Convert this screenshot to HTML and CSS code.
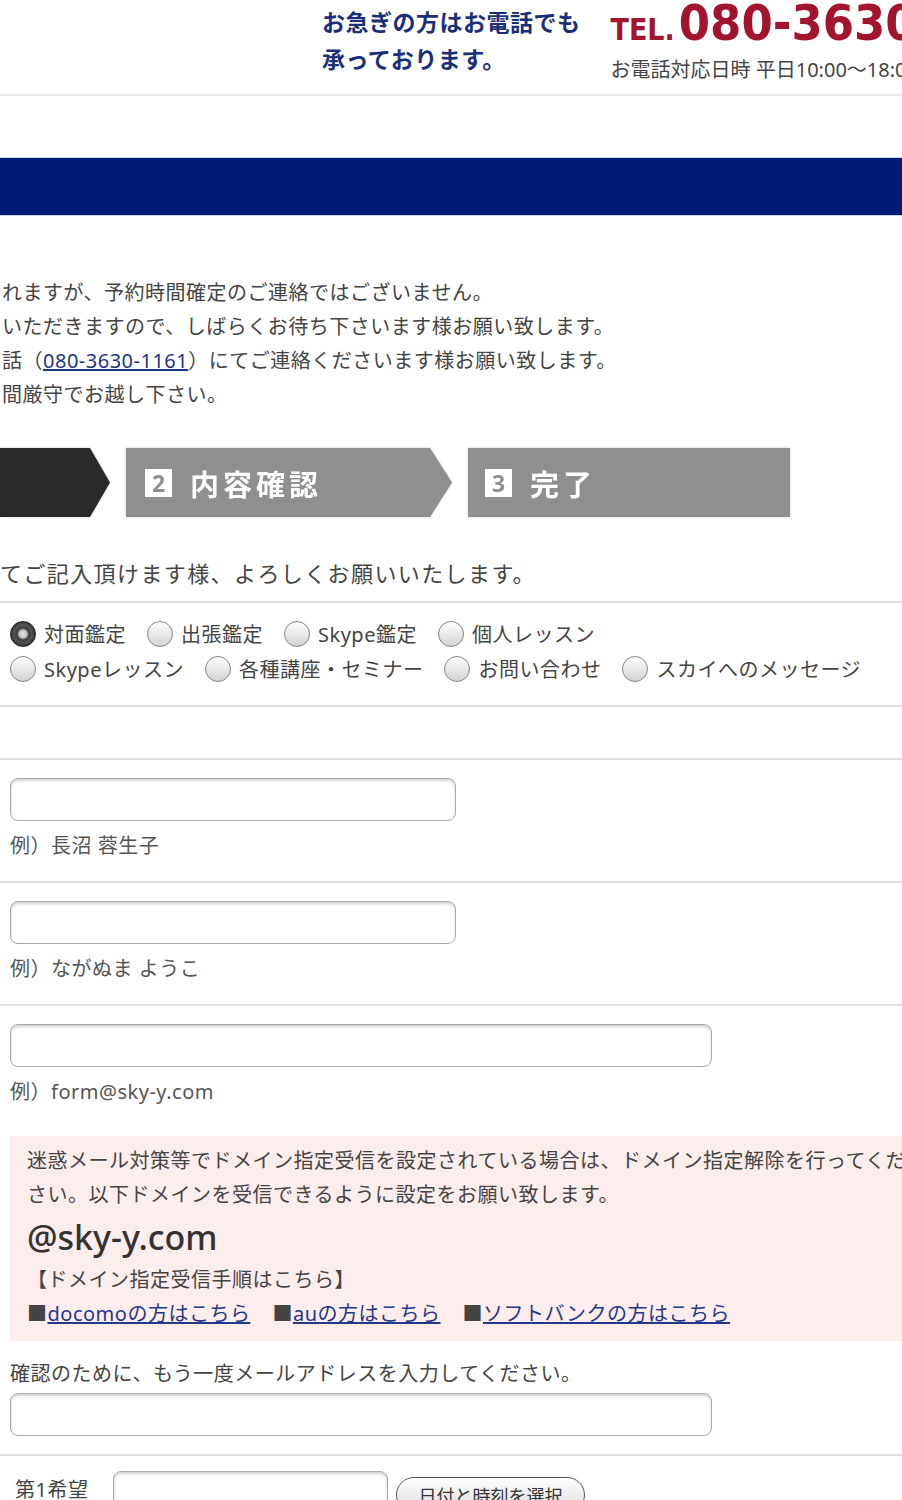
FILE: index.html
```html
<!DOCTYPE html>
<html lang="ja">
<head>
	<title>ご予約・お問い合わせ</title>
	<meta charset="utf-8">
	<link rel="stylesheet" href="styles.css">
</head>
<body>
	<div class="page">
		<div class="header">
			<p class="header-catch">お急ぎの方はお電話でも<br>承っております。</p>
			<div class="header-tel">
				<p class="tel-num"><span class="tel-label">TEL.</span>080-3630-1161</p>
				<p class="tel-time">お電話対応日時 平日10:00〜18:00</p>
			</div>
		</div>

		<div class="title-band"></div>

		<div class="intro">
			<p>れますが、予約時間確定のご連絡ではございません。</p>
			<p>いただきますので、しばらくお待ち下さいます様お願い致します。</p>
			<p>話（<a href="#">080-3630-1161</a>）にてご連絡くださいます様お願い致します。</p>
			<p>間厳守でお越し下さい。</p>
		</div>

		<ol class="steps">
			<li class="step step-current"></li>
			<li class="step step-arrow"><span class="step-no">2</span>内容確認</li>
			<li class="step step-last"><span class="step-no">3</span>完了</li>
		</ol>

		<p class="lead">てご記入頂けます様、よろしくお願いいたします。</p>

		<div class="form-row radios">
			<div class="radio-line">
				<label class="radio"><input type="radio" name="kind" checked>対面鑑定</label>
				<label class="radio"><input type="radio" name="kind">出張鑑定</label>
				<label class="radio"><input type="radio" name="kind">Skype鑑定</label>
				<label class="radio"><input type="radio" name="kind">個人レッスン</label>
			</div>
			<div class="radio-line">
				<label class="radio"><input type="radio" name="kind">Skypeレッスン</label>
				<label class="radio"><input type="radio" name="kind">各種講座・セミナー</label>
				<label class="radio"><input type="radio" name="kind">お問い合わせ</label>
				<label class="radio"><input type="radio" name="kind">スカイへのメッセージ</label>
			</div>
		</div>

		<div class="form-row blank"></div>

		<div class="form-row">
			<input type="text" class="field" name="name">
			<p class="example">例）長沼 蓉生子</p>
		</div>

		<div class="form-row">
			<input type="text" class="field" name="kana">
			<p class="example">例）ながぬま ようこ</p>
		</div>

		<div class="form-row">
			<input type="text" class="field field-wide" name="mail">
			<p class="example">例）form@sky-y.com</p>

			<div class="notice">
				<p>迷惑メール対策等でドメイン指定受信を設定されている場合は、ドメイン指定解除を行ってください。以下ドメインを受信できるように設定をお願い致します。</p>
				<p class="notice-domain">@sky-y.com</p>
				<p>【ドメイン指定受信手順はこちら】</p>
				<p class="notice-links">
					<span>■<a href="#">docomoの方はこちら</a></span>
					<span>■<a href="#">auの方はこちら</a></span>
					<span>■<a href="#">ソフトバンクの方はこちら</a></span>
				</p>
			</div>

			<p class="confirm-label">確認のために、もう一度メールアドレスを入力してください。</p>
			<input type="text" class="field field-wide" name="mail2">
		</div>

		<div class="form-row date-row">
			<span class="date-label">第1希望</span>
			<input type="text" class="field field-date" name="date1">
			<button type="button" class="date-btn">日付と時刻を選択</button>
		</div>
	</div>
</body>
</html>
```

FILE: styles.css
```css
*{
	padding: 0;
	margin: 0;
}
body{
	font-family: "Noto Sans", "Noto Sans CJK JP", sans-serif;
	color: #444;
	background: #fff;
	letter-spacing: 0.5px;
}
.page{
	width: 902px;
	overflow: hidden;
}

/* header */
.header{
	display: flex;
	gap: 30px;
	height: 94px;
	padding-left: 322px;
	border-bottom: 2px solid #e6e6e6;
	white-space: nowrap;
}
.header-catch{
	padding-top: 4px;
	font-size: 23px;
	line-height: 37px;
	font-weight: bold;
	color: #1b2f78;
}
.tel-num{
	font-family: "DejaVu Sans Condensed", "DejaVu Sans", sans-serif;
	font-weight: bold;
	font-size: 50px;
	line-height: 46px;
	letter-spacing: 0;
	color: #a3152e;
}
.tel-label{
	font-size: 30px;
	margin-right: 4px;
}
.tel-time{
	margin-top: 4px;
	font-size: 20px;
	line-height: 26px;
	letter-spacing: 0;
	color: #444;
}

.title-band{
	height: 59px;
	margin-top: 61px;
	background: #001d76;
	border-top: 1px solid #c9d0e6;
	border-bottom: 1px solid #c9d0e6;
	box-sizing: border-box;
}

.intro{
	margin-top: 60px;
	padding-left: 2px;
	font-size: 20px;
	line-height: 34px;
	white-space: nowrap;
}
.intro a{
	color: #1c3584;
}

/* steps */
.steps{
	list-style: none;
	display: flex;
	gap: 16px;
	margin-top: 36px;
	height: 69px;
	filter: drop-shadow(0 0 1px #c8c8c8);
}
.step{
	display: flex;
	align-items: center;
	gap: 18px;
	height: 69px;
	background: #8f8f8f;
	color: #fff;
	font-size: 29px;
	font-weight: bold;
	letter-spacing: 4px;
	white-space: nowrap;
}
.step-current{
	width: 110px;
	background: #2a2a2a;
	clip-path: polygon(0 0, 90px 0, 110px 50%, 90px 100%, 0 100%);
}
.step-arrow{
	width: 326px;
	padding-left: 19px;
	box-sizing: border-box;
	clip-path: polygon(0 0, 304px 0, 326px 50%, 304px 100%, 0 100%);
}
.step-last{
	width: 322px;
	padding-left: 17px;
	box-sizing: border-box;
}
.step-no{
	display: inline-block;
	width: 27px;
	height: 28px;
	background: #fff;
	color: #8f8f8f;
	font-size: 23px;
	line-height: 28px;
	text-align: center;
	letter-spacing: 0;
}

.lead{
	margin-top: 39px;
	font-size: 22px;
	line-height: 34px;
	letter-spacing: 1.4px;
	white-space: nowrap;
}

/* form */
.form-row{
	border-top: 2px solid #dedede;
	padding: 18px 10px 18px;
}
.lead + .form-row{
	margin-top: 11px;
}
.radios{
	padding: 13px 10px 19px;
}
.radio-line{
	display: flex;
	gap: 21px;
	height: 35px;
	align-items: center;
	white-space: nowrap;
}
.radio{
	display: flex;
	align-items: center;
	font-size: 20px;
}
.radio input{
	appearance: none;
	-webkit-appearance: none;
	width: 26px;
	height: 26px;
	margin: 0 8px 0 0;
	border: 1px solid #858585;
	border-radius: 50%;
	background: linear-gradient(#ffffff, #d2d2d2);
	box-sizing: border-box;
}
.radio input:checked{
	border-color: #222;
	background: radial-gradient(circle, #e9e9e9 0, #bdbdbd 4px, #3a3a3a 6px, #555 9px, #2a2a2a 13px);
}
.blank{
	height: 51px;
	padding: 0;
}

.field{
	display: block;
	width: 446px;
	height: 43px;
	border: 1px solid #a9a9a9;
	border-radius: 8px;
	box-shadow: inset 0 2px 3px rgba(0,0,0,.18);
	box-sizing: border-box;
	background: #fff;
}
.field-wide{
	width: 702px;
}
.example{
	margin-top: 8px;
	font-size: 20px;
	line-height: 34px;
	color: #555;
}

.notice{
	width: 930px;
	margin-top: 27px;
	padding: 8px 17px 10px;
	box-sizing: border-box;
	background: #fdeded;
	font-size: 20px;
	line-height: 34px;
}
.notice-domain{
	font-size: 34px;
	line-height: 51px;
	font-weight: 500;
	letter-spacing: 0;
	color: #333;
}
.notice-links{
	display: flex;
	gap: 22px;
	white-space: nowrap;
}
.notice-links a{
	color: #24388a;
}
.confirm-label{
	margin-top: 16px;
	font-size: 20px;
	line-height: 34px;
}
.confirm-label + .field{
	margin-top: 2px;
}

.date-row{
	display: flex;
	align-items: flex-start;
	padding: 15px 10px 0 15px;
}
.date-label{
	margin-top: 2px;
	width: 98px;
	font-size: 20px;
	line-height: 34px;
}
.field-date{
	width: 275px;
}
.date-btn{
	margin: 6px 0 0 8px;
	width: 189px;
	height: 36px;
	border: 1px solid #555;
	border-radius: 18px;
	background: linear-gradient(#fff, #dcdcdc);
	font-family: "Noto Sans CJK JP", sans-serif;
	font-size: 18px;
	color: #333;
}
```
